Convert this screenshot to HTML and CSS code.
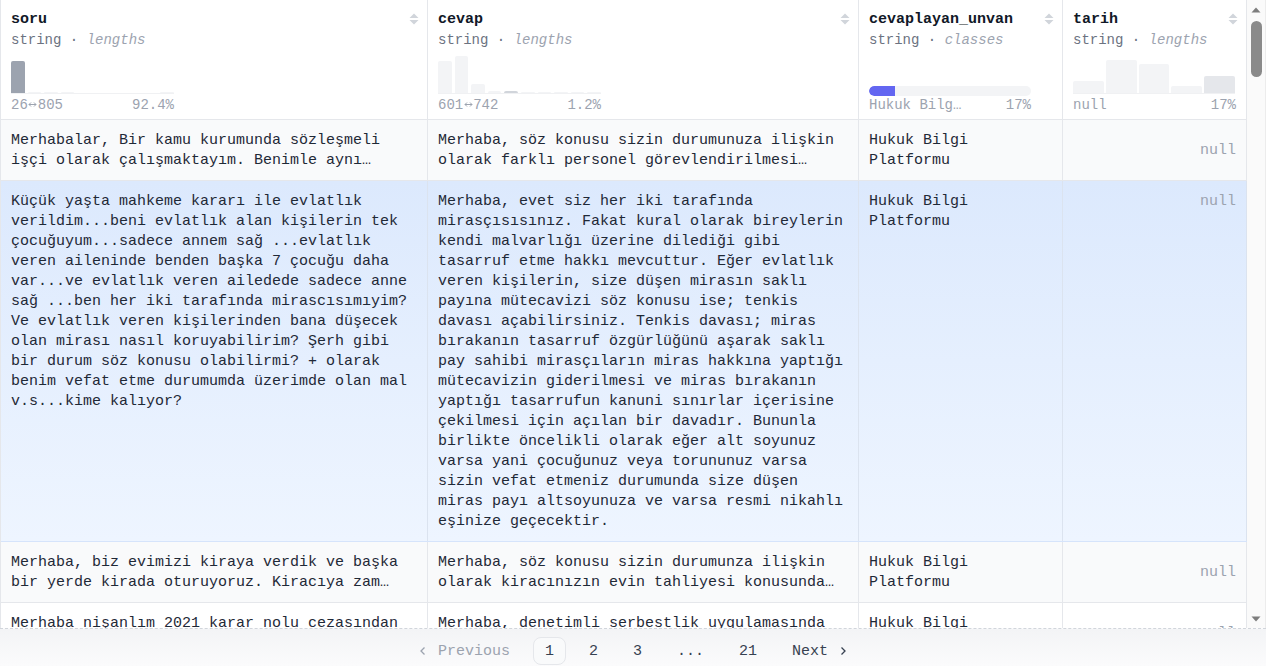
FILE: index.html
```html
<!DOCTYPE html>
<html lang="tr">
<head>
<meta charset="utf-8">
<title>Dataset viewer</title>
<link rel="stylesheet" href="styles.css">
</head>
<body>
<div class="viewer">
  <div class="main">
    <div class="table">
      <div class="row head">
        <div class="cell hcell">
          <div class="htitle"><span>soru</span><svg class="sort" width="12" height="14" viewBox="0 0 12 14"><path d="M1.5 6 6 1.5 10.5 6Z M1.5 8 6 12.5 10.5 8Z"/></svg></div>
          <div class="htype">string · <em>lengths</em></div>
          <div class="hist">
            <i class="bar dark" style="height:32px"></i><i class="bar" style="height:1px"></i><i class="bar" style="height:1px"></i><i class="bar" style="height:1px"></i><i class="bar" style="height:0"></i><i class="bar" style="height:0"></i><i class="bar" style="height:0"></i><i class="bar" style="height:0"></i><i class="bar" style="height:0"></i><i class="bar" style="height:1px"></i>
          </div>
          <div class="hfoot"><span>26<svg class="range" width="9" height="9" viewBox="0 0 9 9"><path d="M1 4.5h7M3 2.5 1 4.5 3 6.5M6 2.5 8 4.5 6 6.5"/></svg>805</span><span>92.4%</span></div>
        </div>
        <div class="cell hcell">
          <div class="htitle"><span>cevap</span><svg class="sort" width="12" height="14" viewBox="0 0 12 14"><path d="M1.5 6 6 1.5 10.5 6Z M1.5 8 6 12.5 10.5 8Z"/></svg></div>
          <div class="htype">string · <em>lengths</em></div>
          <div class="hist">
            <i class="bar" style="height:32px"></i><i class="bar" style="height:37px"></i><i class="bar" style="height:9px"></i><i class="bar" style="height:2px"></i><i class="bar mid" style="height:2px"></i><i class="bar" style="height:1px"></i><i class="bar" style="height:1px"></i><i class="bar" style="height:1px"></i><i class="bar" style="height:1px"></i><i class="bar" style="height:1px"></i>
          </div>
          <div class="hfoot"><span>601<svg class="range" width="9" height="9" viewBox="0 0 9 9"><path d="M1 4.5h7M3 2.5 1 4.5 3 6.5M6 2.5 8 4.5 6 6.5"/></svg>742</span><span>1.2%</span></div>
        </div>
        <div class="cell hcell">
          <div class="htitle"><span>cevaplayan_unvan</span><svg class="sort" width="12" height="14" viewBox="0 0 12 14"><path d="M1.5 6 6 1.5 10.5 6Z M1.5 8 6 12.5 10.5 8Z"/></svg></div>
          <div class="htype">string · <em>classes</em></div>
          <div class="cls"><div class="clsbar"><div class="clsfill" style="width:26px"></div></div></div>
          <div class="hfoot flush"><span>Hukuk Bilg…</span><span>17%</span></div>
        </div>
        <div class="cell hcell">
          <div class="htitle"><span>tarih</span><svg class="sort" width="12" height="14" viewBox="0 0 12 14"><path d="M1.5 6 6 1.5 10.5 6Z M1.5 8 6 12.5 10.5 8Z"/></svg></div>
          <div class="htype">string · <em>lengths</em></div>
          <div class="hist wide">
            <i class="bar" style="height:12px"></i><i class="bar" style="height:33px"></i><i class="bar" style="height:29px"></i><i class="bar" style="height:7px"></i><i class="bar light" style="height:17px"></i>
          </div>
          <div class="hfoot"><span>null</span><span>17%</span></div>
        </div>
      </div>

      <div class="row alt">
        <div class="cell"><div class="clamp">Merhabalar, Bir kamu kurumunda sözleşmeli işçi olarak çalışmaktayım. Benimle aynı kurumda çalışan kadrolu personel ile aynı işi yapıyoruz.</div></div>
        <div class="cell"><div class="clamp">Merhaba, söz konusu sizin durumunuza ilişkin olarak farklı personel görevlendirilmesi durumunda ücret farkı talep edilebilir.</div></div>
        <div class="cell"><div class="clamp">Hukuk Bilgi Platformu</div></div>
        <div class="cell null mid">null</div>
      </div>

      <div class="row open">
        <div class="cell">Küçük yaşta mahkeme kararı ile evlatlık verildim...beni evlatlık alan kişilerin tek çocuğuyum...sadece annem sağ ...evlatlık veren aileninde benden başka 7 çocuğu daha var...ve evlatlık veren ailedede sadece anne sağ ...ben her iki tarafında mirascısımıyim? Ve evlatlık veren kişilerinden bana düşecek olan mirası nasıl koruyabilirim? Şerh gibi bir durum söz konusu olabilirmi? + olarak benim vefat etme durumumda üzerimde olan mal v.s...kime kalıyor?</div>
        <div class="cell">Merhaba, evet siz her iki tarafında mirasçısısınız. Fakat kural olarak bireylerin kendi malvarlığı üzerine dilediği gibi tasarruf etme hakkı mevcuttur. Eğer evlatlık veren kişilerin, size düşen mirasın saklı payına mütecavizi söz konusu ise; tenkis davası açabilirsiniz. Tenkis davası; miras bırakanın tasarruf özgürlüğünü aşarak saklı pay sahibi mirasçıların miras hakkına yaptığı mütecavizin giderilmesi ve miras bırakanın yaptığı tasarrufun kanuni sınırlar içerisine çekilmesi için açılan bir davadır. Bununla birlikte öncelikli olarak eğer alt soyunuz varsa yani çocuğunuz veya torununuz varsa sizin vefat etmeniz durumunda size düşen miras payı altsoyunuza ve varsa resmi nikahlı eşinize geçecektir.</div>
        <div class="cell">Hukuk Bilgi Platformu</div>
        <div class="cell null">null</div>
      </div>

      <div class="row alt">
        <div class="cell"><div class="clamp">Merhaba, biz evimizi kiraya verdik ve başka bir yerde kirada oturuyoruz. Kiracıya zam yapmak istiyoruz ancak kabul etmiyor.</div></div>
        <div class="cell"><div class="clamp">Merhaba, söz konusu sizin durumunza ilişkin olarak kiracınızın evin tahliyesi konusunda ihtarname gönderebilirsiniz.</div></div>
        <div class="cell"><div class="clamp">Hukuk Bilgi Platformu</div></div>
        <div class="cell null mid">null</div>
      </div>

      <div class="row">
        <div class="cell"><div class="clamp">Merhaba nişanlım 2021 karar nolu cezasından dolayı denetimli serbestlik kapsamında bulunuyor.</div></div>
        <div class="cell"><div class="clamp">Merhaba, denetimli serbestlik uygulamasında hükümlünün yükümlülüklere uyması gerekmektedir.</div></div>
        <div class="cell"><div class="clamp">Hukuk Bilgi Platformu</div></div>
        <div class="cell null mid">null</div>
      </div>
    </div>

    <div class="scrollbar">
      <svg class="sarrow" width="10" height="8" viewBox="0 0 10 8"><path d="M0.5 6.5 5 1.5 9.5 6.5Z"/></svg>
      <div class="thumb"></div>
      <svg class="sarrow down" width="10" height="8" viewBox="0 0 10 8"><path d="M0.5 1.5 5 6.5 9.5 1.5Z"/></svg>
    </div>
  </div>

  <nav class="pager">
    <span class="pitem disabled"><svg class="chev" width="10" height="10" viewBox="0 0 10 10"><path d="M6.5 1.5 3 5 6.5 8.5"/></svg>Previous</span>
    <span class="pitem active">1</span>
    <span class="pitem">2</span>
    <span class="pitem">3</span>
    <span class="pitem">...</span>
    <span class="pitem">21</span>
    <span class="pitem">Next<svg class="chev" width="10" height="10" viewBox="0 0 10 10"><path d="M3.5 1.5 7 5 3.5 8.5"/></svg></span>
  </nav>
</div>
</body>
</html>
```

FILE: styles.css
```css
* { box-sizing: border-box; }

html, body {
  margin: 0;
  padding: 0;
  background: #fff;
}

body {
  font-family: "Liberation Mono", "DejaVu Sans Mono", monospace;
  color: #1f2937;
}

.viewer {
  width: 1266px;
  height: 666px;
  display: flex;
  flex-direction: column;
  overflow: hidden;
}

.main {
  flex: 1;
  min-height: 0;
  display: flex;
  overflow: hidden;
}

.table {
  width: 1247px;
  flex: none;
  border-left: 1px solid #e5e7eb;
  overflow: hidden;
}

.row {
  display: grid;
  grid-template-columns: 427px 431px 204px 184px;
  border-bottom: 1px solid #e5e7eb;
  background: #fff;
}

.row.alt { background: #f9fafb; }

.row.open {
  background: linear-gradient(to bottom, #dce9fd, #eef5ff);
  border-bottom-color: #d6e4fb;
}

.row.open .cell { border-right-color: #dbe3ef; }

.cell {
  border-right: 1px solid #e5e7eb;
  padding: 11px 10px 9px;
  font-size: 15px;
  line-height: 20px;
  overflow: hidden;
}

.clamp {
  display: -webkit-box;
  -webkit-line-clamp: 2;
  -webkit-box-orient: vertical;
  overflow: hidden;
}

.null {
  color: #9ca3af;
  text-align: right;
}

.null.mid {
  display: flex;
  align-items: center;
  justify-content: flex-end;
}

/* header */
.head { background: #fff; }

.hcell {
  padding: 10px 10px 5px;
}

.htitle {
  display: flex;
  justify-content: space-between;
  align-items: flex-start;
  font-size: 15px;
  line-height: 20px;
  font-weight: bold;
  color: #111827;
}

.sort {
  flex: none;
  margin-top: 2px;
  margin-right: -3px;
  fill: #d1d5db;
}

.htype {
  font-size: 14px;
  line-height: 20px;
  color: #6b7280;
}

.htype em {
  color: #9ca3af;
  font-style: italic;
}

.hist {
  margin-top: 6px;
  width: 163px;
  height: 38px;
  display: flex;
  align-items: flex-end;
  gap: 3px;
  border-bottom: 1px solid #f0f1f3;
}

.hist.wide {
  width: 162px;
  gap: 2px;
}

.bar {
  flex: 1;
  display: block;
  background: #f3f4f6;
  border-radius: 2px 2px 0 0;
}

.bar.dark { background: #9ca3af; }
.bar.mid { background: #d1d5db; }
.bar.light { background: #e5e7eb; }

.cls {
  margin-top: 6px;
  height: 40px;
  display: flex;
  align-items: flex-end;
}

.clsbar {
  width: 162px;
  height: 10px;
  border-radius: 5px;
  background: #f3f4f6;
  overflow: hidden;
}

.clsfill {
  height: 100%;
  background: #6366f1;
  border-radius: 5px 0 0 5px;
}

.hfoot {
  width: 163px;
  margin-top: 2px;
  display: flex;
  justify-content: space-between;
  font-size: 14px;
  line-height: 18px;
  color: #9ca3af;
}

.hfoot.flush {
  width: 162px;
  margin-top: 0;
}

.range {
  fill: none;
  stroke: #9ca3af;
  stroke-width: 1;
  vertical-align: 0;
  margin: 0 0.5px;
}

/* scrollbar */
.scrollbar {
  flex: 1;
  background: #fafafa;
  display: flex;
  flex-direction: column;
  align-items: center;
  padding: 6px 0 5px;
  border-right: 1px solid #ececec;
}

.sarrow { fill: #7d7d7d; flex: none; }
.sarrow.down { margin-top: auto; }

.thumb {
  width: 11px;
  height: 56px;
  margin-top: 7px;
  border-radius: 6px;
  background: #8a8a8a;
}

/* pager */
.pager {
  height: 38px;
  flex: none;
  border-top: 1px dashed #d1d5db;
  background: linear-gradient(to bottom, #f3f4f6, #fbfbfc);
  display: flex;
  justify-content: center;
  align-items: flex-start;
  gap: 11px;
  padding-top: 8px;
}

.pitem {
  height: 28px;
  display: flex;
  align-items: center;
  gap: 10px;
  padding: 0 12px;
  font-size: 15px;
  color: #374151;
}

.pitem.disabled { color: #9ca3af; }

.pitem.active {
  border: 1px solid #e5e7eb;
  border-radius: 8px;
  background: #f9fafb;
  padding: 0 11px;
}

.chev {
  fill: none;
  stroke: currentColor;
  stroke-width: 1.3;
}
```
